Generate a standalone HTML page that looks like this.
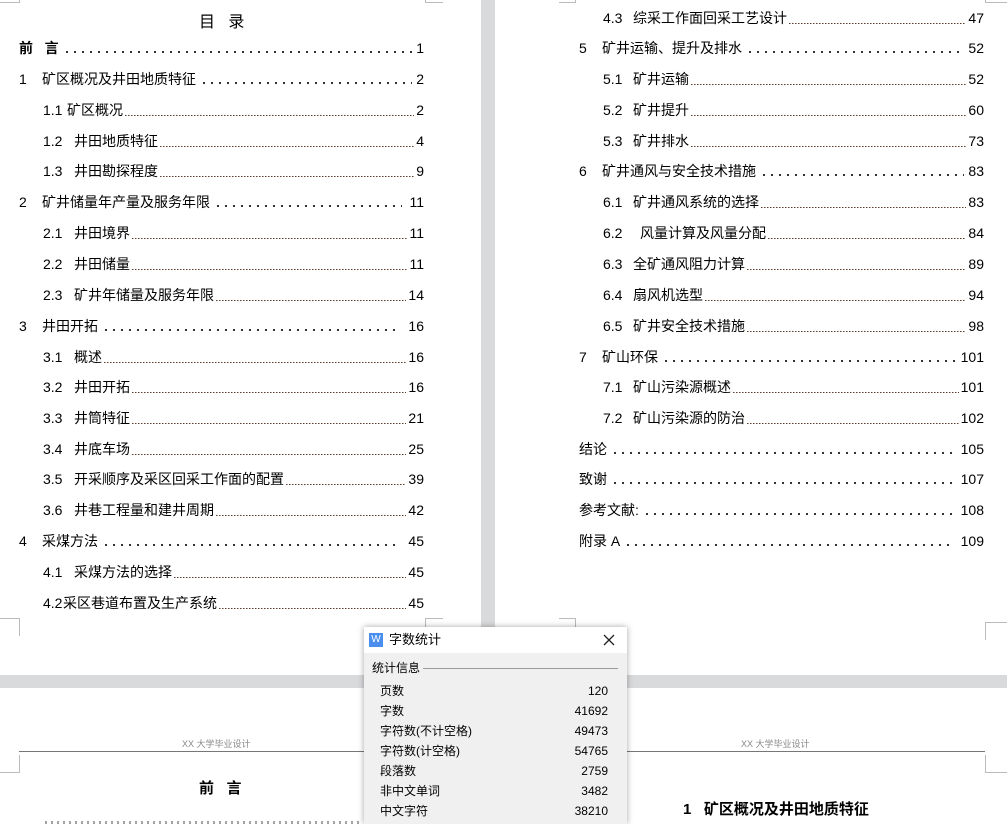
<!DOCTYPE html>
<html><head><meta charset="utf-8"><style>
*{margin:0;padding:0;box-sizing:border-box}
body{width:1007px;height:824px;overflow:hidden;background:#fff;position:relative;font-family:"Liberation Sans","Noto Sans CJK SC","WenQuanYi Zen Hei",sans-serif;color:#000}
.a{position:absolute}
.r{position:absolute;height:20px;line-height:20px;font-size:14px;display:flex;align-items:center;white-space:nowrap}
.r .n{display:inline-block}
.r .d{flex:1;height:2px;margin:8px 4px 0 4px;background-image:radial-gradient(circle,#000 0.9px,transparent 1.1px);background-size:8px 2px;background-repeat:repeat-x;align-self:center}
.r.s .d{height:1px;margin:10px 2px 0 2px;background-image:linear-gradient(90deg,#5a3a2a 50%,transparent 50%);background-size:3px 1px}
.r.s{font-size:14px}
.lr{left:19px;width:405px}
.rr{left:579px;width:405px}
.s.lr{left:43px;width:381px}
.s.rr{left:603px;width:381px}
.g{background:#d9dadc}
.cm{position:absolute;border-color:#bbb;border-style:solid}
.dlg{position:absolute;left:364px;top:627px;width:263px;height:197px;background:#f0f0f0;box-shadow:0 0 6px rgba(0,0,0,.35);font-size:12px}
.dr{position:absolute;left:16px;width:228px;height:20px;line-height:20px;display:flex;justify-content:space-between}
</style></head><body>
<div class="a g" style="left:481px;top:0;width:14px;height:627px"></div>
<div class="a g" style="left:0;top:675px;width:1007px;height:13px"></div>
<div class="cm" style="left:0;top:0;width:20px;height:3px;border-width:0 1px 1px 0"></div>
<div class="cm" style="left:425px;top:0;width:18px;height:3px;border-width:0 0 1px 1px"></div>
<div class="cm" style="left:0;top:618px;width:20px;height:18px;border-width:1px 1px 0 0"></div>
<div class="cm" style="left:425px;top:618px;width:18px;height:18px;border-width:1px 0 0 1px"></div>
<div class="cm" style="left:559px;top:0;width:17px;height:3px;border-width:0 1px 1px 0"></div>
<div class="cm" style="left:985px;top:0;width:22px;height:3px;border-width:0 0 1px 1px"></div>
<div class="cm" style="left:559px;top:618px;width:17px;height:18px;border-width:1px 1px 0 0"></div>
<div class="cm" style="left:985px;top:622px;width:22px;height:18px;border-width:1px 0 0 1px"></div>
<div class="cm" style="left:0;top:755px;width:20px;height:18px;border-width:0 1px 1px 0"></div>
<div class="cm" style="left:985px;top:755px;width:22px;height:18px;border-width:0 0 1px 1px"></div>

<div class="a" style="left:199px;top:8px;font-size:16px">目&nbsp;&nbsp;&nbsp;录</div>

<div class="r lr" style="top:38px"><b>前&nbsp;&nbsp;&nbsp;言</b><span class="d"></span>1</div>
<div class="r lr" style="top:69px"><span class="n" style="width:23px">1</span>矿区概况及井田地质特征<span class="d"></span>2</div>
<div class="r s lr" style="top:100px"><span class="n" style="width:24px">1.1</span>矿区概况<span class="d"></span>2</div>
<div class="r s lr" style="top:131px"><span class="n" style="width:31px">1.2</span>井田地质特征<span class="d"></span>4</div>
<div class="r s lr" style="top:161px"><span class="n" style="width:31px">1.3</span>井田勘探程度<span class="d"></span>9</div>
<div class="r lr" style="top:192px"><span class="n" style="width:23px">2</span>矿井储量年产量及服务年限<span class="d"></span>&nbsp;11</div>
<div class="r s lr" style="top:223px"><span class="n" style="width:31px">2.1</span>井田境界<span class="d"></span>11</div>
<div class="r s lr" style="top:254px"><span class="n" style="width:31px">2.2</span>井田储量<span class="d"></span>11</div>
<div class="r s lr" style="top:285px"><span class="n" style="width:31px">2.3</span>矿井年储量及服务年限<span class="d"></span>14</div>
<div class="r lr" style="top:316px"><span class="n" style="width:23px">3</span>井田开拓<span class="d"></span>&nbsp;16</div>
<div class="r s lr" style="top:347px"><span class="n" style="width:31px">3.1</span>概述<span class="d"></span>16</div>
<div class="r s lr" style="top:377px"><span class="n" style="width:31px">3.2</span>井田开拓<span class="d"></span>16</div>
<div class="r s lr" style="top:408px"><span class="n" style="width:31px">3.3</span>井筒特征<span class="d"></span>21</div>
<div class="r s lr" style="top:439px"><span class="n" style="width:31px">3.4</span>井底车场<span class="d"></span>25</div>
<div class="r s lr" style="top:469px"><span class="n" style="width:31px">3.5</span>开采顺序及采区回采工作面的配置<span class="d"></span>39</div>
<div class="r s lr" style="top:500px"><span class="n" style="width:31px">3.6</span>井巷工程量和建井周期<span class="d"></span>42</div>
<div class="r lr" style="top:531px"><span class="n" style="width:23px">4</span>采煤方法<span class="d"></span>&nbsp;45</div>
<div class="r s lr" style="top:562px"><span class="n" style="width:31px">4.1</span>采煤方法的选择<span class="d"></span>45</div>
<div class="r s lr" style="top:593px"><span class="n" style="width:20px">4.2</span>采区巷道布置及生产系统<span class="d"></span>45</div>

<div class="r s rr" style="top:8px"><span class="n" style="width:30px">4.3</span>综采工作面回采工艺设计<span class="d"></span>47</div>
<div class="r rr" style="top:38px"><span class="n" style="width:23px">5</span>矿井运输、提升及排水<span class="d"></span>52</div>
<div class="r s rr" style="top:69px"><span class="n" style="width:30px">5.1</span>矿井运输<span class="d"></span>52</div>
<div class="r s rr" style="top:100px"><span class="n" style="width:30px">5.2</span>矿井提升<span class="d"></span>60</div>
<div class="r s rr" style="top:131px"><span class="n" style="width:30px">5.3</span>矿井排水<span class="d"></span>73</div>
<div class="r rr" style="top:161px"><span class="n" style="width:23px">6</span>矿井通风与安全技术措施<span class="d"></span>83</div>
<div class="r s rr" style="top:192px"><span class="n" style="width:30px">6.1</span>矿井通风系统的选择<span class="d"></span>83</div>
<div class="r s rr" style="top:223px"><span class="n" style="width:37px">6.2</span>风量计算及风量分配<span class="d"></span>84</div>
<div class="r s rr" style="top:254px"><span class="n" style="width:30px">6.3</span>全矿通风阻力计算<span class="d"></span>89</div>
<div class="r s rr" style="top:285px"><span class="n" style="width:30px">6.4</span>扇风机选型<span class="d"></span>94</div>
<div class="r s rr" style="top:316px"><span class="n" style="width:30px">6.5</span>矿井安全技术措施<span class="d"></span>98</div>
<div class="r rr" style="top:347px"><span class="n" style="width:23px">7</span>矿山环保<span class="d"></span>101</div>
<div class="r s rr" style="top:377px"><span class="n" style="width:30px">7.1</span>矿山污染源概述<span class="d"></span>101</div>
<div class="r s rr" style="top:408px"><span class="n" style="width:30px">7.2</span>矿山污染源的防治<span class="d"></span>102</div>
<div class="r rr" style="top:439px">结论<span class="d"></span>105</div>
<div class="r rr" style="top:469px">致谢<span class="d"></span>107</div>
<div class="r rr" style="top:500px">参考文献:<span class="d"></span>&nbsp;108</div>
<div class="r rr" style="top:531px">附录 A<span class="d"></span>&nbsp;109</div>

<div class="a" style="left:182px;top:737px;font-size:9px;color:#888">XX 大学毕业设计</div>
<div class="a" style="left:19px;top:751px;width:345px;height:1px;background:#777"></div>
<div class="a" style="left:741px;top:737px;font-size:9px;color:#888">XX 大学毕业设计</div>
<div class="a" style="left:626px;top:751px;width:359px;height:1px;background:#777"></div>
<div class="a" style="left:199px;top:777px;font-size:15px;font-weight:bold">前&nbsp;&nbsp;&nbsp;言</div>
<div class="a" style="left:683px;top:798px;font-size:15px;font-weight:bold">1&nbsp;&nbsp;&nbsp;矿区概况及井田地质特征</div>
<div class="a" style="left:45px;top:821px;width:315px;height:3px;background-image:linear-gradient(90deg,#333 30%,transparent 30%);background-size:6px 3px;opacity:.45"></div>

<div class="dlg">
 <div class="a" style="left:0;top:0;width:263px;height:26px;background:#fff"></div>
 <div class="a" style="left:5px;top:6px;width:14px;height:14px;background:#4a8ff0;color:#fff;font-size:10px;line-height:14px;text-align:center">W</div>
 <div class="a" style="left:25px;top:4px;font-size:13px;line-height:18px">字数统计</div>
 <svg class="a" style="left:239px;top:7px" width="12" height="12" viewBox="0 0 12 12"><path d="M1 1L11 11M11 1L1 11" stroke="#222" stroke-width="1.3"/></svg>
 <div class="a" style="left:8px;top:32px;font-size:12px;line-height:18px">统计信息</div>
 <div class="a" style="left:59px;top:41px;width:195px;height:1px;background:#999"></div>
 <div class="dr" style="top:54px"><span>页数</span><span>120</span></div>
 <div class="dr" style="top:74px"><span>字数</span><span>41692</span></div>
 <div class="dr" style="top:94px"><span>字符数(不计空格)</span><span>49473</span></div>
 <div class="dr" style="top:114px"><span>字符数(计空格)</span><span>54765</span></div>
 <div class="dr" style="top:134px"><span>段落数</span><span>2759</span></div>
 <div class="dr" style="top:154px"><span>非中文单词</span><span>3482</span></div>
 <div class="dr" style="top:174px"><span>中文字符</span><span>38210</span></div>
</div>
</body></html>
